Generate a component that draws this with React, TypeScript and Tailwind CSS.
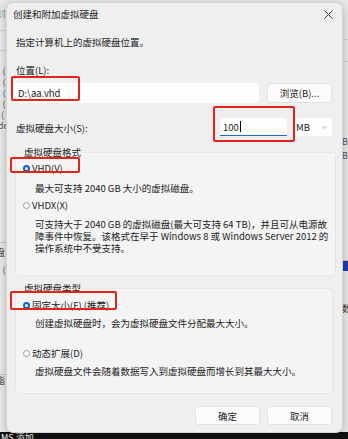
import React from "react";

const Radio = ({ checked }: { checked?: boolean }) =>
  checked ? (
    <span className="block w-[7px] h-[7px] rounded-full border-2 border-[#0a63c9] bg-white shrink-0" />
  ) : (
    <span className="block w-[7px] h-[7px] rounded-full border border-[#9a9a9a] bg-white shrink-0" />
  );

const RedBox = ({ cls }: { cls: string }) => (
  <div className={"absolute border-2 border-[#e3241b] rounded-[2px] pointer-events-none " + cls} />
);

export default function App() {
  return (
    <div className="relative w-[348px] h-[439px] overflow-hidden bg-[#e9e9e9] font-['Noto_Sans_CJK_SC',sans-serif] text-[9.5px] text-[#1c1c1c]">
      {/* background app behind the dialog */}
      <div className="flex flex-col h-full">
        <div className="flex-1 flex justify-between text-[#555]">
          <div className="w-[6px] flex flex-col text-[9px] leading-[11px] overflow-hidden">
            <div className="h-[8px]" />
            <div className="text-[#999] whitespace-nowrap -ml-[3px]">封</div>
            <div className="h-[12px] border-b border-[#d0d0d0]" />
            <div className="h-[20px] border-b border-[#d0d0d0]" />
            <div className="h-[14px]" />
            <div className="whitespace-nowrap -ml-[2px]">: (</div>
            <div className="whitespace-nowrap -ml-[2px]">: (</div>
            <div className="whitespace-nowrap -ml-[2px] text-[#2a6bd0]">: (</div>
            <div className="whitespace-nowrap -ml-[2px]">: (</div>
            <div className="whitespace-nowrap ml-[1px]">(</div>
            <div className="whitespace-nowrap -ml-[2px]">dc</div>
            <div className="h-[112px] border-b border-[#c8c8c8]" />
            <div className="h-[4px]" />
            <div className="whitespace-nowrap -ml-[4px] text-[#333]">盘</div>
            <div className="h-[6px]" />
            <div className="whitespace-nowrap -ml-[2px]">: (</div>
            <div className="h-[100px] border-b border-[#c8c8c8]" />
            <div className="whitespace-nowrap -ml-[4px] text-[#333]">酯</div>
          </div>
          <div className="w-[5px] flex flex-col text-[9px] leading-[11px] overflow-hidden items-end">
            <div className="h-[40px] w-full border-b border-[#cfcfcf]" />
            <div className="h-[22px] w-full border-b border-[#cfcfcf]" />
            <div className="h-[74px]" />
            <div className="whitespace-nowrap">B</div>
            <div className="h-[3px]" />
            <div className="whitespace-nowrap">B</div>
            <div className="h-[100px] w-full border-b border-[#bdbdbd]" />
            <div className="h-[10px] w-full bg-[#1d3fb8]" />
            <div className="h-[32px]" />
            <div className="whitespace-nowrap -mr-[3px] text-[#333]">数</div>
          </div>
        </div>
        <div className="h-[7px] bg-[#111] overflow-hidden text-white text-[9px] leading-[12px] pl-[1px] whitespace-nowrap">
          MS 添加
        </div>
      </div>

      {/* dialog window */}
      <div className="absolute left-[6px] top-[2px] w-[337px] h-[431px] bg-[#efefef] rounded-[7px] border border-[#d4d4d4] shadow-[0_2px_8px_rgba(0,0,0,0.25)] flex flex-col pl-[6px] pr-[10px]">
        {/* title */}
        <div className="h-[22px] flex items-center justify-between leading-[14px]">
          <span>创建和附加虚拟硬盘</span>
          <svg width="9" height="9" viewBox="0 0 9 9" className="mr-[-1px]">
            <path d="M0.5 0.5 L8.5 8.5 M8.5 0.5 L0.5 8.5" stroke="#333" strokeWidth="1" />
          </svg>
        </div>
        <div className="mt-[10px] h-[14px] leading-[14px] ml-[3px]">指定计算机上的虚拟硬盘位置。</div>
        <div className="mt-[14px] h-[14px] leading-[14px] ml-[3px]">位置(L):</div>
        <div className="mt-[6px] flex gap-[8px] h-[20px]">
          <div className="w-[246px] h-full bg-[#fdfdfd] rounded-[3px] flex items-center pl-[5px] leading-[14px]">
            D:\aa.vhd
          </div>
          <div className="w-[65px] h-full bg-[#fbfbfb] border border-[#e2e2e2] rounded-[3px] flex items-center justify-center leading-[14px]">
            浏览(B)...
          </div>
        </div>
        <div className="mt-[15px] flex items-center h-[19px]">
          <span className="ml-[3px] leading-[14px]">虚拟硬盘大小(S):</span>
          <div className="ml-auto flex gap-[8px] h-full">
            <div className="w-[67px] h-[18px] bg-[#fdfdfd] rounded-t-[3px] border-b border-[#1b6ed1] flex items-center pl-[3px] leading-[14px]">
              100
              <span className="block w-px h-[11px] bg-black ml-px" />
            </div>
            <div className="w-[37px] h-[18px] bg-[#fdfdfd] rounded-[3px] flex items-center justify-between pl-[1px] pr-[5px] leading-[14px]">
              <span>MB</span>
              <svg width="5" height="3" viewBox="0 0 5 3">
                <path d="M0.5 0.5 L2.5 2.5 L4.5 0.5" stroke="#999" strokeWidth="0.8" fill="none" />
              </svg>
            </div>
          </div>
        </div>

        <fieldset className="mt-[8px] ml-[2px] w-[318px] bg-[#f4f4f4] border border-[#e6e6e6] rounded-[4px] px-[7px] pb-[21px]">
          <legend className="leading-[14px] px-[1px] text-[#222]">虚拟硬盘格式</legend>
          <div className="mt-[2px] flex items-center h-[14px] gap-[2px] leading-[14px]">
            <Radio checked />
            <span>VHD(V)</span>
          </div>
          <div className="mt-[6px] ml-[12px] leading-[14px] h-[14px]">最大可支持 2040 GB 大小的虚拟磁盘。</div>
          <div className="mt-[3px] flex items-center h-[14px] gap-[2px] leading-[14px]">
            <Radio />
            <span>VHDX(X)</span>
          </div>
          <div className="mt-[6px] ml-[12px] leading-[12px] whitespace-nowrap">
            可支持大于 2040 GB 的虚拟磁盘(最大可支持 64 TB)，并且可从电源故
            <br />
            障事件中恢复。该格式在早于 Windows 8 或 Windows Server 2012 的
            <br />
            操作系统中不受支持。
          </div>
        </fieldset>

        <fieldset className="mt-[5px] ml-[2px] w-[318px] bg-[#f4f4f4] border border-[#e6e6e6] rounded-[4px] px-[7px] pb-[15px]">
          <legend className="leading-[14px] px-[1px] text-[#222]">虚拟硬盘类型</legend>
          <div className="mt-[3px] flex items-center h-[14px] gap-[2px] leading-[14px]">
            <Radio checked />
            <span>固定大小(F) (推荐)</span>
          </div>
          <div className="mt-[4px] ml-[12px] leading-[14px] h-[14px]">创建虚拟硬盘时，会为虚拟硬盘文件分配最大大小。</div>
          <div className="mt-[16px] flex items-center h-[14px] gap-[2px] leading-[14px]">
            <Radio />
            <span>动态扩展(D)</span>
          </div>
          <div className="mt-[4px] ml-[12px] leading-[14px] h-[14px]">虚拟硬盘文件会随着数据写入到虚拟硬盘而增长到其最大大小。</div>
        </fieldset>

        <div className="mt-[12px] flex justify-end gap-[7px] h-[19px]">
          <div className="w-[65px] h-full bg-[#fbfbfb] border border-[#e2e2e2] rounded-[3px] flex items-center justify-center leading-[14px]">
            确定
          </div>
          <div className="w-[65px] h-full bg-[#fbfbfb] border border-[#e2e2e2] rounded-[3px] flex items-center justify-center leading-[14px]">
            取消
          </div>
        </div>

        {/* red annotation boxes */}
        <RedBox cls="left-[4px] top-[73px] w-[69px] h-[25px]" />
        <RedBox cls="left-[206px] top-[103px] w-[82px] h-[36px]" />
        <RedBox cls="left-[3px] top-[154px] w-[70px] h-[16px]" />
        <RedBox cls="left-[3px] top-[288px] w-[107px] h-[19px]" />
      </div>
    </div>
  );
}
